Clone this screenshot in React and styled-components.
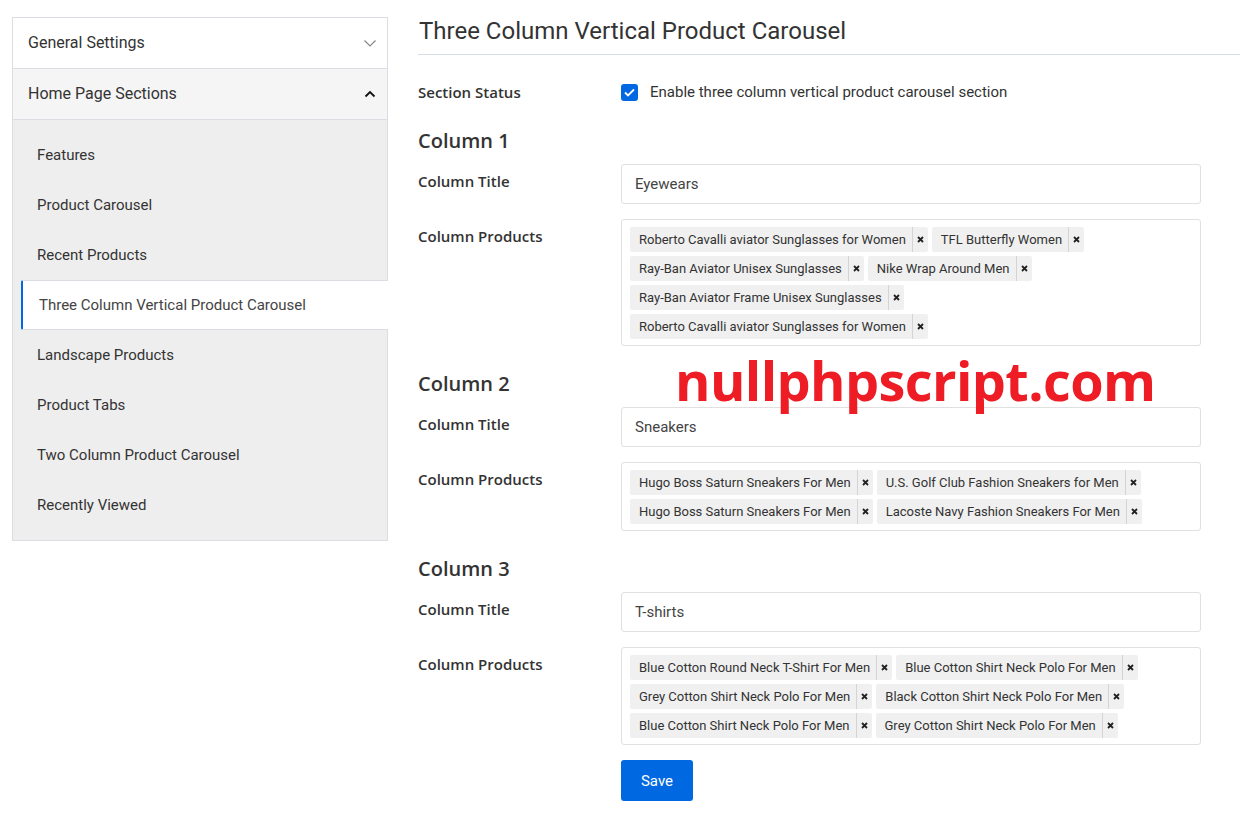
import styled, { createGlobalStyle } from "styled-components";

const GlobalStyle = createGlobalStyle`
    * { box-sizing: border-box; }
    body {
        margin: 0;
        background: #fff;
        font-family: Roboto, "Liberation Sans", sans-serif;
        color: #333;
    }
`;

const Page = styled.div`
    display: flex;
    align-items: flex-start;
    gap: 30px;
    padding: 17px 0 0 12px;
`;

const Sidebar = styled.aside`
    width: 376px;
    flex-shrink: 0;
    border: 1px solid #dadee3;
`;

const AccordionHeader = styled.div`
    display: flex;
    align-items: center;
    justify-content: space-between;
    height: ${(p) => (p.$first ? "50px" : "51px")};
    padding: 0 10px 1px 15px;
    font-size: 16px;
    color: #333;
    background: ${(p) => (p.$open ? "#f5f5f5" : "#fff")};
    border-top: ${(p) => (p.$first ? "none" : "1px solid #dadee3")};
`;

const SubList = styled.ul`
    list-style: none;
    margin: 0;
    padding: 10px 0 10px 8px;
    background: #eeeeee;
    border-top: 1px solid #dadee3;
`;

const SubItem = styled.li`
    height: 50px;
    display: flex;
    align-items: center;
    font-size: 15px;
    margin-right: ${(p) => (p.$active ? "-1px" : "0")};
    padding-left: ${(p) => (p.$active ? "16px" : "14px")};
    background: ${(p) => (p.$active ? "#fff" : "transparent")};
    border-left: 2px solid ${(p) => (p.$active ? "#0068e1" : "transparent")};
    border-top: 1px solid ${(p) => (p.$active ? "#dadee3" : "transparent")};
    border-bottom: 1px solid ${(p) => (p.$active ? "#dadee3" : "transparent")};
    border-radius: ${(p) => (p.$active ? "2px 0 0 2px" : "0")};
    color: ${(p) => (p.$active ? "#444" : "#333")};
`;

const Main = styled.main`
    position: relative;
    flex: 1;
`;

const Title = styled.h1`
    margin: 0;
    padding: 0 0 8px 1px;
    font-size: 24px;
    line-height: 29px;
    font-weight: 400;
    color: #333;
    border-bottom: 1px solid #d9dee3;
`;

const Form = styled.div`
    width: 783px;
    padding-top: 27px;
`;

const Row = styled.div`
    display: grid;
    grid-template-columns: 203px 580px;
    align-items: ${(p) => (p.$center ? "center" : "start")};
    margin-bottom: ${(p) => p.$mb || "15px"};
`;

const Label = styled.div`
    font-family: "Open Sans", "Liberation Sans", sans-serif;
    font-weight: 600;
    font-size: 15px;
    line-height: 20px;
    color: #333;
    padding-top: ${(p) => (p.$center ? "0" : "7px")};
`;

const CheckLine = styled.label`
    display: flex;
    align-items: center;
    gap: 12px;
    font-size: 15px;
    color: #333;
`;

const CheckBox = styled.span`
    width: 17px;
    height: 17px;
    border-radius: 3px;
    background: #0068e1;
    display: flex;
    align-items: center;
    justify-content: center;
`;

const ColumnHeading = styled.h2`
    margin: 0 0 11px;
    font-family: "Open Sans", "Liberation Sans", sans-serif;
    font-weight: 600;
    font-size: 20px;
    line-height: 24px;
    color: #333;
`;

const Input = styled.div`
    height: 40px;
    border: 1px solid #e0e0e0;
    border-radius: 3px;
    padding: 0 13px;
    display: flex;
    align-items: center;
    font-size: 15px;
    color: #444;
`;

const TagBox = styled.div`
    border: 1px solid #e0e0e0;
    border-radius: 3px;
    padding: 7px 8px 6px;
    display: flex;
    flex-wrap: wrap;
    gap: 4px;
`;

const Tag = styled.span`
    display: inline-flex;
    align-items: stretch;
    height: 25px;
    background: #f0f0f0;
    border-radius: 2px;
    font-size: 13px;
    color: #333;
`;

const TagText = styled.span`
    display: flex;
    align-items: center;
    padding: 0 6px 1px 9px;
`;

const TagRemove = styled.span`
    width: 16px;
    display: flex;
    align-items: center;
    justify-content: center;
    padding-bottom: 1px;
    border-left: 1px solid #d4d4d4;
`;

const Group = styled.section`
    margin-top: ${(p) => (p.$first ? "27px" : "26px")};
`;

const Actions = styled.div`
    margin-top: 15px;
    padding-left: 203px;
`;

const SaveButton = styled.button`
    width: 72px;
    height: 41px;
    border: none;
    border-radius: 3px;
    background: #0068e1;
    color: #fff;
    font-family: Roboto, "Liberation Sans", sans-serif;
    font-size: 15px;
    cursor: pointer;
`;

const Watermark = styled.div`
    position: absolute;
    left: 257px;
    top: 331px;
    font-family: "Open Sans", "Liberation Sans", sans-serif;
    font-weight: 700;
    font-size: 54px;
    line-height: 64px;
    color: #ee1c25;
    letter-spacing: -0.6px;
    pointer-events: none;
`;

const Chevron = ({ up }) =>
    up ? (
        <svg width="14" height="14" viewBox="0 0 14 14">
            <path d="M2.5 9.5 L7 5 L11.5 9.5" fill="none" stroke="#111" strokeWidth="1.8" />
        </svg>
    ) : (
        <svg width="14" height="14" viewBox="0 0 14 14">
            <path d="M1.5 4.5 L7 10 L12.5 4.5" fill="none" stroke="#888" strokeWidth="1.2" />
        </svg>
    );

const Cross = () => (
    <svg width="7" height="7" viewBox="0 0 7 7">
        <path d="M1 1 L6 6 M6 1 L1 6" stroke="#222" strokeWidth="1.8" />
    </svg>
);

const sections = [
    "Features",
    "Product Carousel",
    "Recent Products",
    "Three Column Vertical Product Carousel",
    "Landscape Products",
    "Product Tabs",
    "Two Column Product Carousel",
    "Recently Viewed",
];

const columns = [
    {
        title: "Eyewears",
        products: [
            "Roberto Cavalli aviator Sunglasses for Women",
            "TFL Butterfly Women",
            "Ray-Ban Aviator Unisex Sunglasses",
            "Nike Wrap Around Men",
            "Ray-Ban Aviator Frame Unisex Sunglasses",
            "Roberto Cavalli aviator Sunglasses for Women",
        ],
    },
    {
        title: "Sneakers",
        products: [
            "Hugo Boss Saturn Sneakers For Men",
            "U.S. Golf Club Fashion Sneakers for Men",
            "Hugo Boss Saturn Sneakers For Men",
            "Lacoste Navy Fashion Sneakers For Men",
        ],
    },
    {
        title: "T-shirts",
        products: [
            "Blue Cotton Round Neck T-Shirt For Men",
            "Blue Cotton Shirt Neck Polo For Men",
            "Grey Cotton Shirt Neck Polo For Men",
            "Black Cotton Shirt Neck Polo For Men",
            "Blue Cotton Shirt Neck Polo For Men",
            "Grey Cotton Shirt Neck Polo For Men",
        ],
    },
];

function App() {
    return (
        <>
            <GlobalStyle />
            <Page>
                <Sidebar>
                    <AccordionHeader $first>
                        General Settings
                        <Chevron />
                    </AccordionHeader>
                    <AccordionHeader $open>
                        Home Page Sections
                        <Chevron up />
                    </AccordionHeader>
                    <SubList>
                        {sections.map((s, i) => (
                            <SubItem key={s} $active={i === 3}>
                                {s}
                            </SubItem>
                        ))}
                    </SubList>
                </Sidebar>

                <Main>
                    <Title>Three Column Vertical Product Carousel</Title>
                    <Form>
                        <Row $center $mb="0">
                            <Label $center>Section Status</Label>
                            <CheckLine>
                                <CheckBox>
                                    <svg width="11" height="9" viewBox="0 0 11 9">
                                        <path d="M1 4.5 L4 7.5 L10 1.5" fill="none" stroke="#fff" strokeWidth="1.8" />
                                    </svg>
                                </CheckBox>
                                Enable three column vertical product carousel section
                            </CheckLine>
                        </Row>

                        {columns.map((col, i) => (
                            <Group key={i} $first={i === 0}>
                                <ColumnHeading>Column {i + 1}</ColumnHeading>
                                <Row>
                                    <Label>Column Title</Label>
                                    <Input>{col.title}</Input>
                                </Row>
                                <Row $mb="0">
                                    <Label>Column Products</Label>
                                    <TagBox>
                                        {col.products.map((p, j) => (
                                            <Tag key={j}>
                                                <TagText>{p}</TagText>
                                                <TagRemove>
                                                    <Cross />
                                                </TagRemove>
                                            </Tag>
                                        ))}
                                    </TagBox>
                                </Row>
                            </Group>
                        ))}

                        <Actions>
                            <SaveButton>Save</SaveButton>
                        </Actions>
                    </Form>
                    <Watermark>nullphpscript.com</Watermark>
                </Main>
            </Page>
        </>
    );
}

export default App;
